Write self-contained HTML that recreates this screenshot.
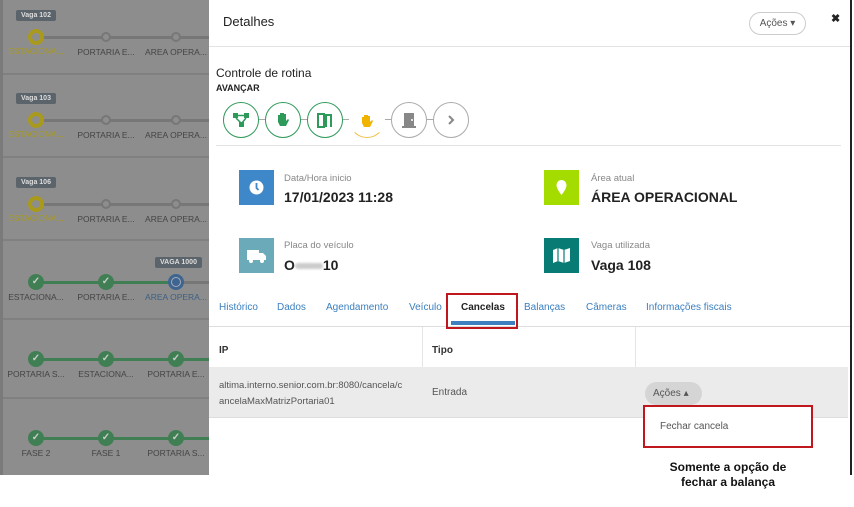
<!DOCTYPE html>
<html><head><meta charset="utf-8"><style>
*{box-sizing:border-box;margin:0;padding:0}
body{width:854px;height:507px;background:#fff;font-family:"Liberation Sans",sans-serif;position:relative;overflow:hidden}
.left{position:absolute;left:0;top:0;width:209px;height:475px;background:#8d8d8d;border-left:3px solid #7a7a7a}
.row{position:absolute;left:0;width:209px;border-bottom:2px solid #808080}
.ln{position:absolute;height:3px}
.nd{position:absolute;width:16px;height:16px;border-radius:50%}
.lb{position:absolute;font-size:8.5px;color:#444;width:70px;text-align:center;white-space:nowrap}
.tip{position:absolute;background:#5b646b;color:#ddd;font-size:7px;font-weight:bold;padding:2px 5px;border-radius:2px}
.modal{position:absolute;left:209px;top:0;width:643px;height:475px;background:#fff;border-right:2px solid #222}
.a{position:absolute}
.tab{position:absolute;top:302px;font-size:10px;color:#3a7fbf}
.ic{position:absolute;width:36px;height:36px;border-radius:50%;border:1.5px solid #2e9a5a;top:102px;display:flex;align-items:center;justify-content:center}
</style></head><body>
<div class="left">
 <div class="row" style="top:0;height:75px"></div>
 <div class="row" style="top:75px;height:83px"></div>
 <div class="row" style="top:158px;height:83px"></div>
 <div class="row" style="top:241px;height:79px"></div>
 <div class="row" style="top:320px;height:79px"></div>
</div>
<div id="lp"></div>
<script>
var lp=document.getElementById('lp'),h='';
var rows=[[37,'Vaga 102'],[120,'Vaga 103'],[204,'Vaga 106']];
rows.forEach(function(r){var y=r[0];
h+='<div class="tip" style="left:16px;top:'+(y-27)+'px">'+r[1]+'</div>';
h+='<div class="ln" style="left:36px;top:'+(y-1)+'px;width:173px;background:#777"></div>';
h+='<div class="nd" style="left:28px;top:'+(y-8)+'px;border:4px solid #a99a1e;background:#8d8d8d"></div>';
[106,176].forEach(function(x){h+='<div class="nd" style="left:'+(x-5)+'px;top:'+(y-5)+'px;width:10px;height:10px;border:2px solid #777;background:#8d8d8d"></div>'});
h+='<div class="lb" style="left:1px;top:'+(y+9)+'px;color:#a89a22">ESTACIONA...</div><div class="lb" style="left:71px;top:'+(y+10)+'px">PORTARIA E...</div><div class="lb" style="left:141px;top:'+(y+10)+'px">AREA OPERA...</div>';});
function ck(x,y){return '<div class="nd" style="left:'+(x-8)+'px;top:'+(y-8)+'px;background:#3f7f53;color:#ccc;font-size:10px;text-align:center;line-height:16px;font-weight:bold">✓</div>'}
var g=[[282,['ESTACIONA...','PORTARIA E...','AREA OPERA...']],[359,['PORTARIA S...','ESTACIONA...','PORTARIA E...']],[438,['FASE 2','FASE 1','PORTARIA S...']]];
g.forEach(function(r,i){var y=r[0];
h+='<div class="ln" style="left:36px;top:'+(y-1)+'px;width:'+(i==0?140:173)+'px;background:#3f7f53"></div>';
if(i==0){h+='<div class="ln" style="left:176px;top:'+(y-1)+'px;width:33px;background:#777"></div><div class="tip" style="left:155px;top:257px">VAGA 1000</div>';}
h+=ck(36,y)+ck(106,y)+(i==0?'<div class="nd" style="left:168px;top:'+(y-8)+'px;background:#3d6590;border:3px solid #3d6590"><div style="width:10px;height:10px;border-radius:50%;border:1.5px solid #aab"></div></div>':ck(176,y));
r[1].forEach(function(t,j){h+='<div class="lb" style="left:'+(1+70*j)+'px;top:'+(y+10)+'px;'+(i==0&&j==2?'color:#3d5f85':'')+'">'+t+'</div>'});});
lp.innerHTML=h;
</script>
<div class="modal">
 <div class="a" style="left:14px;top:14px;font-size:13px;color:#222">Detalhes</div>
 <div class="a" style="left:540px;top:12px;width:57px;height:23px;border:1px solid #ccc;border-radius:12px;font-size:10px;color:#555;line-height:21px;text-align:center">Ações ▾</div>
 <div class="a" style="left:622px;top:12px;font-size:11px;font-weight:bold;color:#222">✖</div>
 <div class="a" style="left:0;top:46px;width:641px;height:1px;background:#e3e3e3"></div>
 <div class="a" style="left:7px;top:66px;font-size:12px;color:#222">Controle de rotina</div>
 <div class="a" style="left:7px;top:83px;font-size:9px;font-weight:bold;color:#222">AVANÇAR</div>
 <div class="a" style="left:40px;top:119px;width:200px;height:1px;background:#aaa"></div>
 <div class="ic" style="left:14px;background:#fff"><svg width="16" height="14"><rect x="0" y="0" width="5" height="5" fill="#2e9a5a"/><rect x="11" y="0" width="5" height="5" fill="#2e9a5a"/><rect x="6" y="9" width="5" height="5" fill="#2e9a5a"/><path d="M5 2.5H11M3 5L8 10M13 5L9 10" stroke="#2e9a5a" stroke-width="1.5"/></svg></div>
 <div class="ic" style="left:56px;background:#fff"><svg width="14" height="16"><path d="M2 7V3h2v4V1h2v6V1h2v6V2h2v7l2-2 1 1-3 6H4L2 10z" fill="#2e9a5a"/></svg></div>
 <div class="ic" style="left:98px;background:#fff"><svg width="16" height="16"><path d="M1 15V2h6v13zM9 15V3h5v12" stroke="#2e9a5a" stroke-width="2" fill="none"/></svg></div>
 <div class="ic" style="left:140px;border-color:transparent;border-bottom-color:#f0c14a;background:#fff"><svg width="14" height="14"><path d="M2 7V4h2v3V2h2v5V2h2v5V3h2v6l2-2 1 1-3 6H4L2 10z" fill="#f0b400"/></svg></div>
 <div class="ic" style="left:182px;border-color:#aaa;background:#fff"><svg width="14" height="16"><rect x="2" y="1" width="10" height="13" fill="#888"/><rect x="0" y="14" width="14" height="2" fill="#888"/><circle cx="10" cy="8" r="1" fill="#fff"/></svg></div>
 <div class="ic" style="left:224px;border-color:#aaa;background:#fff"><svg width="10" height="12"><path d="M3 2l4 4-4 4" stroke="#888" stroke-width="2" fill="none"/></svg></div>
 <div class="a" style="left:7px;top:145px;width:625px;height:1px;background:#e3e3e3"></div>
 <div class="a" style="left:30px;top:170px;width:35px;height:35px;background:#3e87c8"><svg width="35" height="35"><circle cx="17.5" cy="17.5" r="7" fill="#fff"/><path d="M17.5 13v5l2 2" stroke="#3e87c8" stroke-width="1.8" fill="none"/></svg></div>
 <div class="a" style="left:75px;top:173px;font-size:9.5px;color:#888">Data/Hora inicio</div>
 <div class="a" style="left:75px;top:189px;font-size:14px;font-weight:bold;color:#222">17/01/2023 11:28</div>
 <div class="a" style="left:335px;top:170px;width:35px;height:35px;background:#a5dc00"><svg width="35" height="35"><path d="M17.5 10a5 5 0 0 1 5 5c0 4-5 10-5 10s-5-6-5-10a5 5 0 0 1 5-5z" fill="#fff"/></svg></div>
 <div class="a" style="left:382px;top:173px;font-size:9.5px;color:#888">Área atual</div>
 <div class="a" style="left:382px;top:189px;font-size:14px;font-weight:bold;color:#222">ÁREA OPERACIONAL</div>
 <div class="a" style="left:30px;top:238px;width:35px;height:35px;background:#6aaab9"><svg width="35" height="35"><path d="M8 12h12v10H8zM20 15h4l3 3v4h-7z" fill="#fff"/><circle cx="12" cy="23" r="2" fill="#fff"/><circle cx="23" cy="23" r="2" fill="#fff"/></svg></div>
 <div class="a" style="left:75px;top:240px;font-size:9.5px;color:#888">Placa do veículo</div>
 <div class="a" style="left:75px;top:257px;font-size:14px;font-weight:bold;color:#222">O<span style="display:inline-block;width:28px;height:6px;background:#ccc;vertical-align:middle;border-radius:3px;filter:blur(1px)"></span>10</div>
 <div class="a" style="left:335px;top:238px;width:35px;height:35px;background:#087c74"><svg width="35" height="35"><path d="M9 12l5-2 6 2 6-2v13l-6 2-6-2-5 2z" fill="#fff"/><path d="M14 10v13M20 12v13" stroke="#087c74" stroke-width="1.2"/></svg></div>
 <div class="a" style="left:382px;top:240px;font-size:9.5px;color:#888">Vaga utilizada</div>
 <div class="a" style="left:382px;top:257px;font-size:14px;font-weight:bold;color:#222">Vaga 108</div>
 <div class="tab" style="left:10px">Histórico</div>
 <div class="tab" style="left:68px">Dados</div>
 <div class="tab" style="left:117px">Agendamento</div>
 <div class="tab" style="left:200px">Veículo</div>
 <div class="tab" style="left:252px;color:#222;font-weight:bold">Cancelas</div>
 <div class="tab" style="left:315px">Balanças</div>
 <div class="tab" style="left:377px">Câmeras</div>
 <div class="tab" style="left:437px">Informações fiscais</div>
 <div class="a" style="left:0;top:326px;width:641px;height:1px;background:#ddd"></div>
 <div class="a" style="left:242px;top:321px;width:64px;height:4px;background:#3d7fbf"></div>
 <div class="a" style="left:237px;top:293px;width:72px;height:36px;border:2px solid #c0171e"></div>
 <div class="a" style="left:213px;top:327px;width:1px;height:40px;background:#e5e5e5"></div>
 <div class="a" style="left:426px;top:327px;width:1px;height:40px;background:#e5e5e5"></div>
 <div class="a" style="left:10px;top:345px;font-size:10px;font-weight:bold;color:#333">IP</div>
 <div class="a" style="left:223px;top:345px;font-size:10px;font-weight:bold;color:#333">Tipo</div>
 <div class="a" style="left:0;top:367px;width:639px;height:51px;background:#ebebeb;border-bottom:1px solid #ddd"></div>
 <div class="a" style="left:10px;top:378px;font-size:9.5px;color:#555;line-height:16px;width:200px">altima.interno.senior.com.br:8080/cancela/c<br>ancelaMaxMatrizPortaria01</div>
 <div class="a" style="left:223px;top:387px;font-size:10px;color:#555">Entrada</div>
 <div class="a" style="left:436px;top:382px;width:57px;height:23px;background:#d5d5d5;border-radius:12px;font-size:10px;color:#555;line-height:23px;padding-left:8px">Ações ▴</div>
 <div class="a" style="left:434px;top:405px;width:170px;height:43px;border:2px solid #c0171e;background:#fff"></div>
 <div class="a" style="left:451px;top:421px;font-size:10px;color:#555">Fechar cancela</div>
</div>
<div class="a" style="left:628px;top:460px;width:200px;text-align:center;font-size:12px;font-weight:bold;color:#111;line-height:15px">Somente a opção de<br>fechar a balança</div>
</body></html>
